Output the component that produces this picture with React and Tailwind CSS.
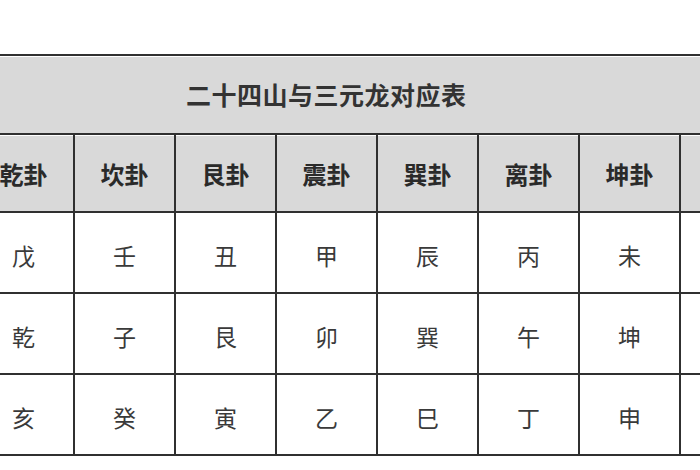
import React from "react";

const heads = ["乾卦", "坎卦", "艮卦", "震卦", "巽卦", "离卦", "坤卦", ""];
const rows = [
  ["戊", "壬", "丑", "甲", "辰", "丙", "未", ""],
  ["乾", "子", "艮", "卯", "巽", "午", "坤", ""],
  ["亥", "癸", "寅", "乙", "巳", "丁", "申", ""],
];

const font = { fontFamily: '"Noto Sans CJK SC", "Noto Sans", sans-serif' };

export default function App() {
  return (
    <div className="w-[700px] h-[470px] bg-white overflow-hidden" style={font}>
      <div className="mt-[54px] ml-[-26px] w-[810px] bg-[#303030] py-[2px] flex flex-col gap-[2px]">
        <div className="h-[77px] bg-[#d9d9d9] flex items-center pl-[212px] border-t border-white">
          <span className="text-[25px] font-bold text-[#333] tracking-[0.5px]">二十四山与三元龙对应表</span>
        </div>
        <div className="grid grid-cols-[repeat(8,99px)] gap-x-[2px] h-[76px]">
          {heads.map((h, i) => (
            <div key={i} className="bg-[#d9d9d9] flex items-center justify-center border-t border-white">
              <span className="text-[24px] font-bold text-[#2a2a2a]">{h}</span>
            </div>
          ))}
        </div>
        {rows.map((r, ri) => (
          <div key={ri} className="grid grid-cols-[repeat(8,99px)] gap-x-[2px] h-[79px]">
            {r.map((c, ci) => (
              <div key={ci} className="bg-white flex items-center justify-center pt-[6px]">
                <span className="text-[23px] text-[#3a3a3a]">{c}</span>
              </div>
            ))}
          </div>
        ))}
      </div>
    </div>
  );
}
